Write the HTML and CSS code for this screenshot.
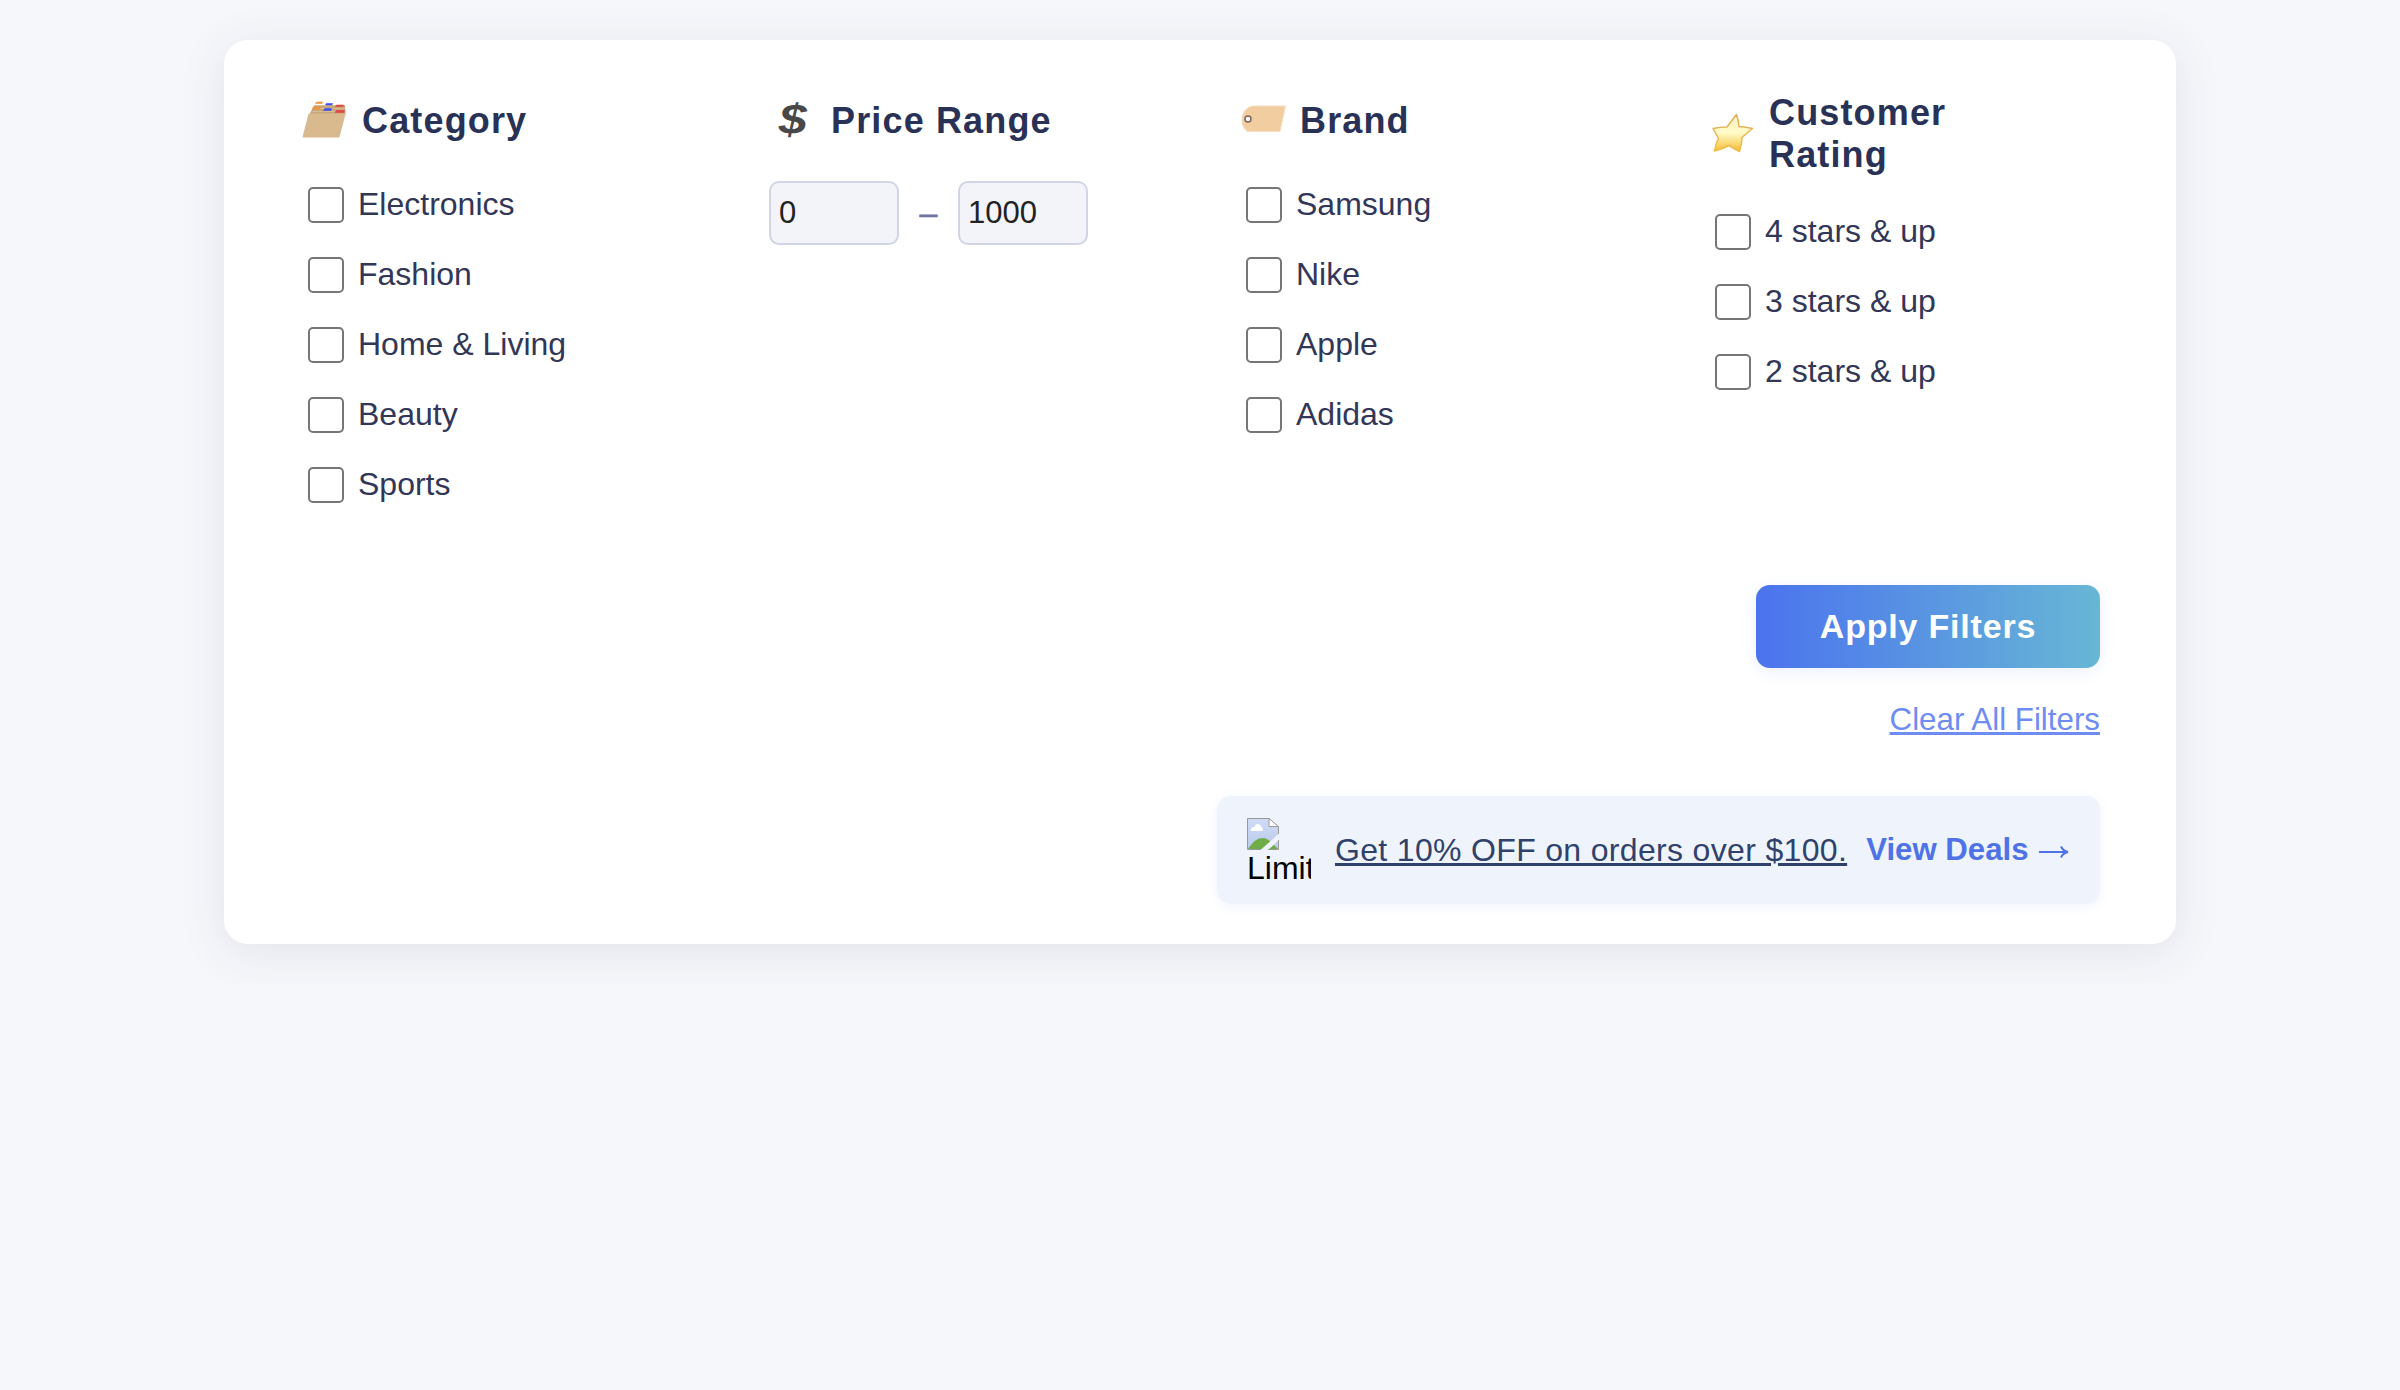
FILE: index.html
```html
<!DOCTYPE html>
<html lang="en">
<head>
<meta charset="utf-8">
<title>Filters</title>
<link rel="stylesheet" href="styles.css">
</head>
<body>
<main class="card">
  <div class="groups">
    <section class="group">
      <h2 class="heading">
        <span class="icon"><svg width="48" height="42" viewBox="-1.500 -2 48 42">
          <path d="M7.500 14 13 4h30.500l.5 10z" fill="#c8a67c"/>
          <path d="M14 4.500h29M12 7.500h31M11 10.500h33" stroke="#d9bb90" stroke-width="1"/>
          <path d="M14 2.500l1-1.500h6l-.5 1.500zM10.500 8l1.500-2h7l-.8 2z" fill="#ee9440" stroke="#ee9440" stroke-width=".6"/>
          <path d="M24 4l1-1.500H31l-.5 1.500zM22 9.500l1.300-2H30l-.6 2z" fill="#3f4ff0" stroke="#3f4ff0" stroke-width=".6"/>
          <path d="M34 5.500l1-1.500H42l-.4 1.500zM33.500 11.500l1.300-2H43l-.4 2z" fill="#e04444" stroke="#e04444" stroke-width=".6"/>
          <path d="M7.500 13H43.500L37.500 36H1.500z" fill="#d9ba8f" stroke="#d9ba8f" stroke-linejoin="round"/>
        </svg></span>
        <span class="title">Category</span>
      </h2>
      <div class="options">
        <label class="option"><input type="checkbox" class="box"><span class="name">Electronics</span></label>
        <label class="option"><input type="checkbox" class="box"><span class="name">Fashion</span></label>
        <label class="option"><input type="checkbox" class="box"><span class="name">Home &amp; Living</span></label>
        <label class="option"><input type="checkbox" class="box"><span class="name">Beauty</span></label>
        <label class="option"><input type="checkbox" class="box"><span class="name">Sports</span></label>
      </div>
    </section>
    <section class="group">
      <h2 class="heading"><span class="icon dollar"><span class="sign">$</span></span><span class="title">Price Range</span></h2>
      <div class="range">
        <input class="amount" type="text" value="0"><span class="dash">–</span><input class="amount" type="text" value="1000">
      </div>
    </section>
    <section class="group">
      <h2 class="heading">
        <span class="icon"><svg width="48" height="42" viewBox="-2 0 48 42">
          <path d="M12 7h33.500L40 32.500H7Q2 28 2 22Q2 15 5 11.500Q8 8 12 7z" fill="#f1cda0" stroke="#f6dfc1"/>
          <circle cx="8" cy="20" r="3" fill="#fff" stroke="#806060" stroke-width="1.500"/>
        </svg></span>
        <span class="title">Brand</span>
      </h2>
      <div class="options">
        <label class="option"><input type="checkbox" class="box"><span class="name">Samsung</span></label>
        <label class="option"><input type="checkbox" class="box"><span class="name">Nike</span></label>
        <label class="option"><input type="checkbox" class="box"><span class="name">Apple</span></label>
        <label class="option"><input type="checkbox" class="box"><span class="name">Adidas</span></label>
      </div>
    </section>
    <section class="group tall">
      <h2 class="heading">
        <span class="icon"><svg width="48" height="42" viewBox="-3.500 0 48 42">
          <defs>
            <linearGradient id="gold" x1="0" y1="0" x2="0" y2="1"><stop offset="0" stop-color="#fff3c0"/><stop offset=".5" stop-color="#fffbc8"/><stop offset="1" stop-color="#f5bd2e"/></linearGradient>
            <linearGradient id="rim" x1="0" y1="0" x2="0" y2="1"><stop offset="0" stop-color="#dcae60"/><stop offset="1" stop-color="#f2bb48"/></linearGradient>
          </defs>
          <path d="M26 1.500Q28 7 28.500 13.500Q35 14 42 15.500Q37 19.500 31.500 24.500Q31.500 31 29 38.500Q24 36 18.500 32.500Q12 36 4 38Q5 31 8 25.500Q5 20 2.500 15.500Q9 14 16.500 14Q21 8 26 1.500z" fill="url(#gold)" stroke="url(#rim)" stroke-width="1.500" stroke-linejoin="round"/>
        </svg></span>
        <span class="title">Customer Rating</span>
      </h2>
      <div class="options">
        <label class="option"><input type="checkbox" class="box"><span class="name">4 stars &amp; up</span></label>
        <label class="option"><input type="checkbox" class="box"><span class="name">3 stars &amp; up</span></label>
        <label class="option"><input type="checkbox" class="box"><span class="name">2 stars &amp; up</span></label>
      </div>
    </section>
  </div>
  <div class="actions">
    <button class="apply">Apply Filters</button>
    <a class="clear" href="#">Clear All Filters</a>
  </div>
  <aside class="promo">
    <div class="thumb">
      <svg width="32" height="32" viewBox="0 0 32 32">
        <defs><linearGradient id="sky" x1="0" y1="0" x2="0" y2="1"><stop offset="0" stop-color="#d0dcf6"/><stop offset="1" stop-color="#b9c9ea"/></linearGradient></defs>
        <path d="M.5.5H22L31.500 9V31.500H.5z" fill="url(#sky)"/>
        <path d="M1 31Q8 20 15 20Q20 20 24 24L31 31z" fill="#70ad47"/>
        <path d="M4 13Q3 9 7.500 9Q8 6 11 6Q13.500 6 14 8.500Q16 9 16 13z" fill="#fff"/>
        <path d="M13.500 32 32 15.500V22L21 32z" fill="#eff4fc"/>
        <path d="M14 31.500H.5V.5H22L31.500 9V16M31.500 22V31.500H21" fill="none" stroke="#9a9a9a"/>
        <path d="M22 .5V8.500H31.500z" fill="#fff" stroke="#9a9a9a"/>
      </svg>
      <span class="alt">Limited</span>
    </div>
    <span class="offer">Get 10% OFF on orders over $100.</span>
    <a class="deals" href="#">View Deals
      <svg class="arrow" width="30" height="14" viewBox="0 0 30 14"><path d="M0 7H28M22 1.500Q24 6 29 7Q24 8 22 12.500" fill="none" stroke="#4f73e6" stroke-width="2"/></svg>
    </a>
  </aside>
</main>
</body>
</html>
```
FILE: styles.css
```css
* { box-sizing: border-box; }
body {
  margin: 0;
  padding: 40px 224px;
  background: #f6f7fb;
  font-family: "Liberation Sans", Arial, sans-serif;
  font-size: 32px;
}
.card {
  height: 904px;
  padding: 52px 76px 40px;
  border-radius: 24px;
  background: #fff;
  box-shadow: 0 8px 48px rgba(60, 50, 85, .1);
  display: flex;
  flex-direction: column;
  align-items: flex-end;
}
.groups {
  width: 100%;
  height: 493px;
  display: grid;
  grid-template-columns: repeat(4, 1fr);
  gap: 76px;
}
.heading {
  margin: 0 0 26px;
  min-height: 56px;
  display: flex;
  align-items: center;
  gap: 14px;
  color: #293256;
  font-size: 36px;
  line-height: 42px;
  letter-spacing: 1.15px;
}
.title { max-width: 240px; padding-top: 1px; }
.tall .title { padding-top: 0; }
.icon { width: 48px; height: 42px; flex: none; }
.icon svg { display: block; }
.dollar {
  color: #484848;
  font-size: 42px;
  line-height: 42px;
  font-style: italic;
  text-align: center;
  letter-spacing: 0;
}
.sign { display: inline-block; transform: scaleX(1.2); }
.options { padding: 13px 0 0 8px; display: grid; gap: 34px; }
.tall .options { padding-top: 12px; }
.option {
  height: 36px;
  display: flex;
  align-items: center;
  gap: 14px;
  color: #323657;
}
.name { padding-bottom: 2px; }
.box {
  appearance: none;
  width: 36px;
  height: 36px;
  margin: 0;
  border: 2px solid #767676;
  border-radius: 5px;
  background: #fff;
}
.range { margin-top: 33px; display: flex; align-items: center; }
.amount {
  width: 130px;
  height: 64px;
  padding: 0 8px;
  border: 2px solid #d0d5e6;
  border-radius: 10px;
  background: #f3f4f9;
  color: #222;
  font: 31px "Liberation Sans", Arial, sans-serif;
}
.dash { width: 59px; text-align: center; color: #6e75a3; -webkit-text-stroke: .6px #6e75a3; }
.actions { display: flex; flex-direction: column; align-items: flex-end; }
.apply {
  width: 344px;
  height: 83px;
  border: 0;
  border-radius: 14px;
  background: linear-gradient(90deg, #4b73ee, #67b7d5);
  box-shadow: 0 4px 16px rgba(75, 115, 238, .1);
  color: #fff;
  font: bold 34px "Liberation Sans", Arial, sans-serif;
  letter-spacing: .8px;
}
.clear {
  margin-top: 34px;
  color: #6e8cf2;
  font-size: 31.3px;
  line-height: 36px;
  text-decoration-thickness: 3px;
}
.promo {
  width: 883px;
  height: 108px;
  margin-top: 58px;
  padding: 0 30px;
  border-radius: 14px;
  background: #eff4fc;
  box-shadow: 0 2px 12px rgba(75, 115, 238, .08);
  display: flex;
  align-items: center;
}
.thumb {
  width: 64px;
  height: 64px;
  overflow: hidden;
  color: #000;
  line-height: 36px;
}
.thumb svg, .alt { display: block; }
.offer {
  margin-left: 24px;
  color: #30426b;
  letter-spacing: .33px;
  text-decoration: underline;
  text-decoration-thickness: 3px;
  white-space: nowrap;
}
.deals {
  margin-left: 19px;
  display: flex;
  align-items: center;
  gap: 10px;
  color: #4f73e6;
  font-size: 31.2px;
  font-weight: bold;
  text-decoration: none;
  white-space: nowrap;
}
.arrow { margin-top: 3px; }
```
